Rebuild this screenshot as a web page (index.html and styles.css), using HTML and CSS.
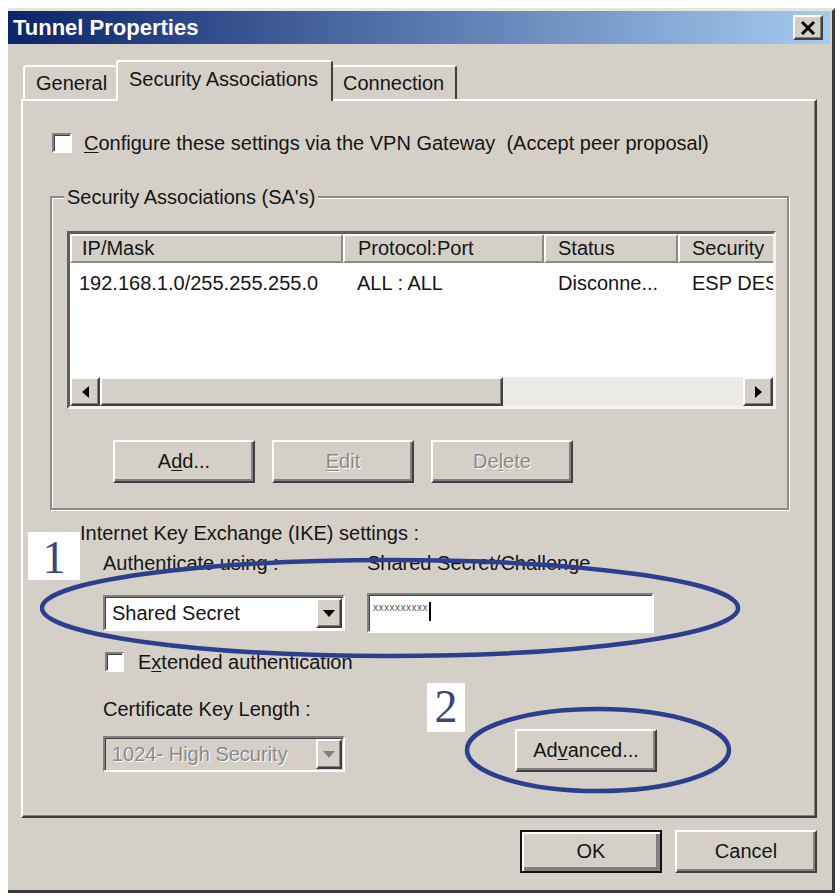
FILE: index.html
```html
<!DOCTYPE html>
<html>
<head>
<meta charset="utf-8">
<title>Tunnel Properties</title>
<link rel="stylesheet" href="styles.css">
</head>
<body>
<div class="window">
  <div class="titlebar">
    <span class="title">Tunnel Properties</span>
    <div class="close"><svg width="16" height="14" viewBox="0 0 16 14"><path d="M2 1 L14 13 M14 1 L2 13" stroke="#000" stroke-width="3"/></svg></div>
  </div>
  <div class="tabs">
    <div class="tab tab-general">General</div>
    <div class="tab tab-active">Security Associations</div>
    <div class="tab tab-conn">Connection</div>
  </div>
  <div class="panel">
    <div class="check-row top-check">
      <span class="checkbox"></span>
      <span class="lbl"><u>C</u>onfigure these settings via the VPN Gateway &nbsp;(Accept peer proposal)</span>
    </div>
    <div class="group">
      <div class="legend">Security Associations (SA's)</div>
      <div class="listview">
        <div class="lv-header">
          <div class="lv-col c1">IP/Mask</div>
          <div class="lv-col c2">Protocol:Port</div>
          <div class="lv-col c3">Status</div>
          <div class="lv-col c4">Security</div>
        </div>
        <div class="lv-body">
          <div class="lv-row">
            <div class="lv-cell c1">192.168.1.0/255.255.255.0</div>
            <div class="lv-cell c2">ALL : ALL</div>
            <div class="lv-cell c3">Disconne...</div>
            <div class="lv-cell c4">ESP DES</div>
          </div>
        </div>
        <div class="hscroll">
          <div class="sb-btn"><svg width="7" height="12" viewBox="0 0 7 12"><polygon points="7,0 7,12 0,6" fill="#000"/></svg></div>
          <div class="sb-thumb"></div>
          <div class="sb-track"></div>
          <div class="sb-btn"><svg width="7" height="12" viewBox="0 0 7 12"><polygon points="0,0 0,12 7,6" fill="#000"/></svg></div>
        </div>
      </div>
      <div class="group-buttons">
        <div class="btn">A<u>d</u>d...</div>
        <div class="btn disabled"><u>E</u>dit</div>
        <div class="btn disabled">De<u>l</u>ete</div>
      </div>
    </div>
    <div class="ike">
      <div class="ike-title">Internet Key Exchange (IKE) settings :</div>
      <div class="ike-grid">
        <div class="lbl">Authenticate using :</div>
        <div class="lbl">Shared Secret/Challenge</div>
        <div class="combo">
          <span class="combo-text">Shared Secret</span>
          <span class="combo-btn"><svg width="12" height="7" viewBox="0 0 12 7"><polygon points="0,0 12,0 6,7" fill="#000"/></svg></span>
        </div>
        <div class="textfield"><span class="secret">xxxxxxxxxx</span><span class="caret"></span></div>
      </div>
      <div class="check-row ext-check">
        <span class="checkbox"></span>
        <span class="lbl">E<u>x</u>tended authentication</span>
      </div>
      <div class="cert-row">
        <div class="cert-col">
          <div class="lbl">Certificate Key Length :</div>
          <div class="combo disabled">
            <span class="combo-text">1024- High Security</span>
            <span class="combo-btn"><svg width="12" height="7" viewBox="0 0 12 7"><polygon points="0,0 12,0 6,7" fill="#808080"/></svg></span>
          </div>
        </div>
        <div class="btn adv">Ad<u>v</u>anced...</div>
      </div>
    </div>
  </div>
  <div class="dialog-buttons">
    <div class="btn default">OK</div>
    <div class="btn">Cancel</div>
  </div>
</div>
<div class="annot n1">1</div>
<div class="annot n2">2</div>
<svg class="marks" width="840" height="896" viewBox="0 0 840 896">
  <ellipse cx="390" cy="608" rx="348" ry="48" fill="none" stroke="#2b3f8e" stroke-width="4.5"/>
  <ellipse cx="598" cy="750" rx="131" ry="41" fill="none" stroke="#2b3f8e" stroke-width="4.5"/>
</svg>
</body>
</html>
```
FILE: styles.css
```css
* { box-sizing: border-box; }
body {
  margin: 0;
  background: #fff;
  font-family: "Liberation Sans", Arial, sans-serif;
  font-size: 20px;
  color: #151515;
}
u { text-decoration-thickness: 1px; text-underline-offset: 2px; }

.window {
  margin: 8px 0 0 8px;
  width: 827px;
  height: 885px;
  background: #d4d0c8;
  border-top: 3px solid #e6e4de;
  border-right: 3px solid #3a3a3a;
  border-bottom: 3px solid #3a3a3a;
  padding-right: 2px;
  display: flex;
  flex-direction: column;
}

.titlebar {
  flex: none;
  height: 33px;
  display: flex;
  align-items: center;
  justify-content: space-between;
  padding: 0 7px 0 5px;
  background: linear-gradient(90deg, #0a246a, #a6caf0);
}
.title { color: #fff; font-weight: bold; font-size: 22px; }
.close {
  width: 30px;
  height: 25px;
  background: #d4d0c8;
  border: 2px solid;
  border-color: #fff #404040 #404040 #fff;
  box-shadow: inset -1px -1px 0 #808080;
  display: flex;
  align-items: center;
  justify-content: center;
}

.tabs {
  flex: none;
  display: flex;
  align-items: flex-end;
  height: 39px;
  margin: 16px 13px 0;
  padding-left: 2px;
}
.tab {
  height: 34px;
  background: #d4d0c8;
  border-top: 2px solid #fff;
  border-left: 2px solid #fff;
  border-right: 2px solid #404040;
  border-radius: 3px 3px 0 0;
  display: flex;
  align-items: center;
}
.tab-general { width: 93px; padding-left: 11px; border-right: 0; }
.tab-active {
  width: 217px;
  height: 41px;
  margin-bottom: -2px;
  padding: 0 0 4px 11px;
  position: relative;
  z-index: 1;
}
.tab-conn { width: 124px; padding-left: 10px; border-left: 0; }

.panel {
  flex: none;
  height: 719px;
  margin: 0 13px;
  border: 2px solid;
  border-color: #fff #404040 #404040 #fff;
  box-shadow: inset -1px -1px 0 #808080;
  display: flex;
  flex-direction: column;
  align-items: flex-start;
}

.lbl { line-height: 24px; white-space: nowrap; }

.check-row { display: flex; align-items: center; }
.checkbox {
  flex: none;
  width: 20px;
  height: 20px;
  background: #fff;
  border: 2px solid;
  border-color: #808080 #fff #fff #808080;
  box-shadow: inset 1px 1px 0 #404040;
}
.top-check { margin: 32px 0 0 29px; gap: 12px; height: 20px; }

.group {
  margin: 43px 0 0 27px;
  width: 739px;
  height: 314px;
  border: 2px solid #8c8a86;
  box-shadow: inset 1px 1px 0 #fff, 1px 1px 0 #fff;
  display: flex;
  flex-direction: column;
  align-items: flex-start;
}
.legend {
  margin: -13px 0 0 12px;
  padding: 0 3px;
  line-height: 24px;
  background: #d4d0c8;
}

.listview {
  margin: 22px 0 0 15px;
  width: 709px;
  height: 178px;
  border: 3px solid;
  border-color: #5e5e5e #f4f4f4 #f4f4f4 #5e5e5e;
  background: #fff;
  overflow: hidden;
  display: flex;
  flex-direction: column;
}
.lv-header { flex: none; display: flex; height: 29px; }
.lv-col {
  flex: none;
  background: #d4d0c8;
  border: 2px solid;
  border-color: #fff #8a8a8a #8a8a8a #fff;
  line-height: 25px;
  white-space: nowrap;
}
.c1 { width: 273px; }
.c2 { width: 201px; }
.c3 { width: 134px; }
.c4 { width: 140px; }
.lv-col.c1 { padding-left: 10px; }
.lv-col.c2 { padding-left: 13px; }
.lv-col.c3 { padding-left: 12px; }
.lv-col.c4 { padding-left: 12px; }
.lv-body { flex: none; height: 114px; }
.lv-row { display: flex; margin-top: 8px; line-height: 24px; }
.lv-cell { flex: none; white-space: nowrap; }
.lv-cell.c1 { padding-left: 9px; }
.lv-cell.c2 { padding-left: 14px; }
.lv-cell.c3 { padding-left: 14px; }
.lv-cell.c4 { padding-left: 14px; }

.hscroll { flex: none; display: flex; height: 29px; background: #ecebe7; }
.sb-btn, .sb-thumb {
  flex: none;
  background: #d4d0c8;
  border: 2px solid;
  border-color: #fff #404040 #404040 #fff;
  box-shadow: inset -1px -1px 0 #808080;
}
.sb-btn { width: 30px; display: flex; align-items: center; justify-content: center; }
.sb-thumb { width: 403px; }
.sb-track { flex: 1; }

.group-buttons { display: flex; gap: 17px; margin: 31px 0 0 61px; }

.btn {
  flex: none;
  width: 142px;
  height: 43px;
  background: #d4d0c8;
  border: 2px solid;
  border-color: #fff #404040 #404040 #fff;
  box-shadow: inset -2px -2px 0 #808080;
  display: flex;
  align-items: center;
  justify-content: center;
}
.btn.disabled { color: #8a8a8a; text-shadow: 1px 1px 0 #fff; }
.btn.default {
  border: 2px solid #111;
  box-shadow: inset 2px 2px 0 #fff, inset -4px -4px 0 #808080;
}

.ike { display: flex; flex-direction: column; align-items: flex-start; }
.ike-title { margin: 11px 0 0 57px; line-height: 24px; }
.ike-grid {
  margin: 6px 0 0 80px;
  display: grid;
  grid-template-columns: 242px 287px;
  column-gap: 22px;
  row-gap: 18px;
  align-items: start;
}
.combo {
  height: 36px;
  margin-top: 2px;
  background: #fff;
  border: 2px solid;
  border-color: #808080 #fff #fff #808080;
  box-shadow: inset 1px 1px 0 #404040;
  display: flex;
  align-items: center;
  padding-right: 1px;
}
.combo-text { padding-left: 7px; white-space: nowrap; }
.combo-btn {
  margin-left: auto;
  width: 26px;
  height: 30px;
  background: #d4d0c8;
  border: 2px solid;
  border-color: #fff #404040 #404040 #fff;
  box-shadow: inset -1px -1px 0 #808080;
  display: flex;
  align-items: center;
  justify-content: center;
}
.combo.disabled { background: #d4d0c8; width: 242px; margin-top: 15px; }
.combo.disabled .combo-text { color: #8a8a8a; text-shadow: 1px 1px 0 #fff; }

.textfield {
  height: 40px;
  background: #fff;
  border: 2px solid;
  border-color: #808080 #fff #fff #808080;
  box-shadow: inset 1px 1px 0 #404040;
  display: flex;
  align-items: flex-start;
  padding: 7px 0 0 4px;
}
.secret { font-size: 10px; line-height: 12px; color: #555; letter-spacing: 0.5px; }
.caret { width: 2px; height: 19px; background: #000; margin-left: 1px; }

.ext-check { margin: 17px 0 0 82px; gap: 14px; }
.ext-check .checkbox { width: 19px; height: 20px; }

.cert-row { display: flex; align-items: flex-end; margin: 23px 0 0 80px; }
.cert-col { width: 242px; }
.btn.adv { margin-left: 170px; }

.dialog-buttons {
  flex: none;
  display: flex;
  justify-content: flex-end;
  gap: 13px;
  margin: 12px 13px 0 0;
}

.annot {
  position: absolute;
  background: #fff;
  font-family: "Liberation Serif", "Times New Roman", serif;
  font-size: 46px;
  line-height: 46px;
  color: #3a4676;
  text-align: center;
}
.n1 { left: 28px; top: 532px; width: 52px; height: 48px; padding-top: 3px; }
.n2 { left: 427px; top: 683px; width: 38px; height: 49px; padding-top: 1px; }

.marks { position: absolute; left: 0; top: 0; pointer-events: none; }
```
